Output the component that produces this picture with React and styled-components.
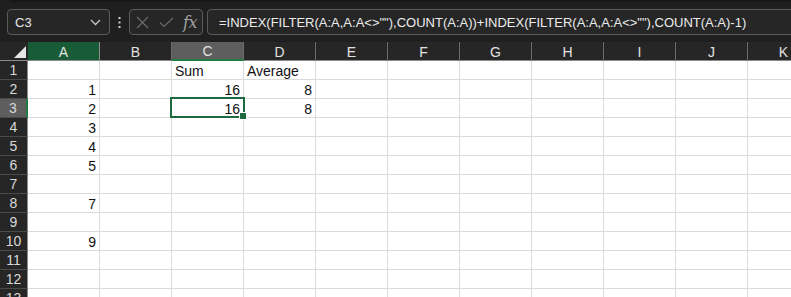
import React from "react";
import styled, { createGlobalStyle } from "styled-components";

const Global = createGlobalStyle`
  html, body { margin: 0; padding: 0; background: #1f1f1f; overflow: hidden; }
  body { font-family: "Liberation Sans", Arial, sans-serif; }
`;

const COLS = ["A", "B", "C", "D", "E", "F", "G", "H", "I", "J", "K"];
const ROWS = 13;
const data = {
  "A2": "1", "A3": "2", "A4": "3", "A5": "4", "A6": "5", "A8": "7", "A10": "9",
  "C1": "Sum", "D1": "Average", "C2": "16", "D2": "8", "C3": "16", "D3": "8",
};
const textCells = { C1: true, D1: true };

const Page = styled.div`
  width: 791px;
  height: 297px;
  overflow: hidden;
  background: #1f1f1f;
  position: relative;
`;

const TopEdge = styled.div`
  height: 2px;
  margin-left: 10px;
  background: #171717;
`;

const Bar = styled.div`
  display: flex;
  align-items: center;
  height: 26px;
  padding: 7px 0 7px 7px;
`;

const Box = styled.div`
  box-sizing: border-box;
  height: 26px;
  border: 1px solid #5b5b5b;
  border-radius: 4px;
  background: #262626;
  display: flex;
  align-items: center;
`;

const NameBox = styled(Box)`
  width: 103px;
  padding: 0 8px 0 7px;
  justify-content: space-between;
  color: #e8e8e8;
  font-size: 13px;
`;

const Dots = styled.div`
  width: 18px;
  display: flex;
  justify-content: center;
`;

const FxBox = styled(Box)`
  width: 74px;
  margin-left: 1px;
  padding: 0 5px 0 6px;
  justify-content: space-between;
`;

const FormulaBox = styled(Box)`
  flex: 1;
  margin-left: 4px;
  margin-right: -6px;
  padding-left: 11px;
  color: #ececec;
  font-size: 13px;
  white-space: nowrap;
  overflow: hidden;
`;

const Fx = styled.span`
  font-family: "DejaVu Serif", "Liberation Serif", serif;
  font-style: italic;
  font-size: 16px;
  color: #a2a2a2;
  letter-spacing: -0.5px;
`;

const Sheet = styled.div`
  display: grid;
  grid-template-columns: 28px repeat(11, 72px);
  grid-auto-rows: 19px;
  position: relative;
`;

const Corner = styled.div`
  box-sizing: border-box;
  background: #262626;
  border-bottom: 1px solid #8a8a8a;
  position: relative;
`;

const Triangle = styled.div`
  position: absolute;
  right: 2px;
  bottom: 2px;
  width: 0;
  height: 0;
  border-left: 12px solid transparent;
  border-bottom: 12px solid #e6e6e6;
`;

const ColHead = styled.div`
  box-sizing: border-box;
  background: ${(p) => (p.$green ? "#185c37" : p.$sel ? "#5e5e5e" : "#262626")};
  border-right: 1px solid ${(p) => (p.$green ? "#8a8a8a" : "#6b6b6b")};
  border-bottom: ${(p) => (p.$sel ? "2px solid #1f7a46" : "1px solid #8a8a8a")};
  color: #e2e2e2;
  font-size: 14px;
  display: flex;
  align-items: center;
  justify-content: center;
  padding-top: 1px;
`;

const RowHead = styled.div`
  box-sizing: border-box;
  background: ${(p) => (p.$sel ? "#5e5e5e" : "#262626")};
  border-bottom: 1px solid #4a4a4a;
  border-right: ${(p) => (p.$sel ? "2px solid #1f7a46" : "1px solid #8a8a8a")};
  color: #d8d8d8;
  font-size: 14px;
  display: flex;
  align-items: center;
  justify-content: center;
`;

const Cell = styled.div`
  box-sizing: border-box;
  background: #ffffff;
  border-right: 1px solid #dadada;
  border-bottom: 1px solid #dadada;
  color: #111;
  font-size: 14px;
  display: flex;
  align-items: center;
  justify-content: ${(p) => (p.$text ? "flex-start" : "flex-end")};
  padding: 1px 3px 0 3px;
  white-space: nowrap;
`;

const Selection = styled.div`
  position: absolute;
  left: 170px;
  top: 55px;
  width: 75px;
  height: 21px;
  box-sizing: border-box;
  border: 2px solid #1e6b41;
  pointer-events: none;
`;

const Handle = styled.div`
  position: absolute;
  right: -4px;
  bottom: -4px;
  width: 6px;
  height: 6px;
  background: #1e6b41;
  border: 1px solid #ffffff;
`;

export default function App() {
  const cells = [];
  cells.push(
    <Corner key="corner">
      <Triangle />
    </Corner>
  );
  COLS.forEach((c) => {
    cells.push(
      <ColHead key={"h" + c} $green={c === "A"} $sel={c === "C"}>
        {c}
      </ColHead>
    );
  });
  for (let r = 1; r <= ROWS; r++) {
    cells.push(
      <RowHead key={"r" + r} $sel={r === 3}>
        {r}
      </RowHead>
    );
    COLS.forEach((c) => {
      const id = c + r;
      cells.push(
        <Cell key={id} $text={!!textCells[id]}>
          {data[id] || ""}
        </Cell>
      );
    });
  }

  return (
    <Page>
      <Global />
      <TopEdge />
      <Bar>
        <NameBox>
          <span>C3</span>
          <svg width="11" height="7" viewBox="0 0 11 7">
            <path d="M1 1 L5.5 5.5 L10 1" fill="none" stroke="#c8c8c8" strokeWidth="1.3" />
          </svg>
        </NameBox>
        <Dots>
          <svg width="3" height="11" viewBox="0 0 3 11">
            <rect x="0.5" y="0" width="2" height="2" fill="#cfcfcf" />
            <rect x="0.5" y="4.5" width="2" height="2" fill="#cfcfcf" />
            <rect x="0.5" y="9" width="2" height="2" fill="#cfcfcf" />
          </svg>
        </Dots>
        <FxBox>
          <svg width="13" height="13" viewBox="0 0 13 13">
            <path d="M1 1 L12 12 M12 1 L1 12" stroke="#6a6a6a" strokeWidth="1.2" fill="none" />
          </svg>
          <svg width="15" height="11" viewBox="0 0 15 11">
            <path d="M1 5.5 L5 9.5 L14 1" stroke="#6a6a6a" strokeWidth="1.2" fill="none" />
          </svg>
          <Fx>fx</Fx>
        </FxBox>
        <FormulaBox>
          =INDEX(FILTER(A:A,A:A&lt;&gt;""),COUNT(A:A))+INDEX(FILTER(A:A,A:A&lt;&gt;""),COUNT(A:A)-1)
        </FormulaBox>
      </Bar>
      <Sheet>
        {cells}
        <Selection>
          <Handle />
        </Selection>
      </Sheet>
    </Page>
  );
}
